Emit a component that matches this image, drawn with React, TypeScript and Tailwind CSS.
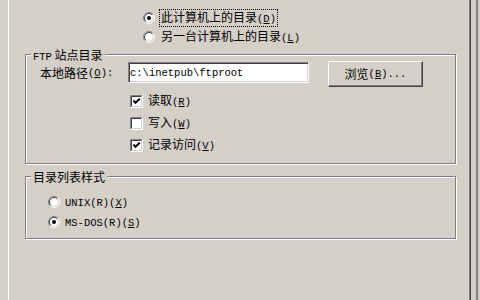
import React from 'react';

const L: React.FC<{ children: React.ReactNode }> = ({ children }) => (
  <span className="font-['Liberation_Mono',monospace] text-[10.5px]">{children}</span>
);

const Key: React.FC<{ k: string; tail?: string }> = ({ k, tail = '' }) => (
  <L>
    (<span className="underline underline-offset-1">{k}</span>){tail}
  </L>
);

const Radio: React.FC<{ checked?: boolean }> = ({ checked }) => (
  <svg width="12" height="12" viewBox="0 0 12 12" className="shrink-0">
    <circle cx="6" cy="6" r="5" fill="#fff" />
    <path d="M2.1 9.9 A5.5 5.5 0 0 1 9.9 2.1" fill="none" stroke="#808080" />
    <path d="M2.1 9.9 A5.5 5.5 0 0 0 9.9 2.1" fill="none" stroke="#fff" />
    <path d="M2.8 9.2 A4.5 4.5 0 0 1 9.2 2.8" fill="none" stroke="#404040" />
    <path d="M2.8 9.2 A4.5 4.5 0 0 0 9.2 2.8" fill="none" stroke="#d4d0c8" />
    {checked && <circle cx="6" cy="6" r="2" fill="#000" />}
  </svg>
);

const Check: React.FC<{ checked?: boolean }> = ({ checked }) => (
  <svg width="13" height="13" viewBox="0 0 13 13" className="shrink-0">
    <rect x="0" y="0" width="13" height="13" fill="#fff" />
    <path d="M0.5 12.5 V0.5 H12.5" fill="none" stroke="#808080" />
    <path d="M1.5 11.5 V1.5 H11.5" fill="none" stroke="#404040" />
    <path d="M0.5 12.5 H12.5 V0.5" fill="none" stroke="#fff" />
    <path d="M1.5 11.5 H11.5 V1.5" fill="none" stroke="#d4d0c8" />
    {checked && <path d="M3.5 5.5 L5.5 7.8 L9.8 3.6" fill="none" stroke="#000" strokeWidth="2" />}
  </svg>
);

const Group: React.FC<{ title: React.ReactNode; className: string; children: React.ReactNode }> = ({
  title,
  className,
  children,
}) => (
  <fieldset
    className={`w-[431px] border border-[#808080] shadow-[1px_1px_0_#fff,inset_1px_1px_0_#fff] ${className}`}
  >
    <legend className="ml-[5px] px-[2px] h-[13px] leading-[13px] bg-[#d4d0c8] whitespace-nowrap">{title}</legend>
    {children}
  </fieldset>
);

export default function App() {
  return (
    <div className="w-[480px] h-[300px] flex bg-[#d4d0c8] text-black text-[12px] leading-[14px] font-['Noto_Sans_CJK_SC',sans-serif] overflow-hidden">
      <div className="w-[8px] shrink-0" />
      <div className="w-[463px] shrink-0 border-l border-l-white border-r border-r-[#404040] shadow-[inset_-1px_0_0_#808080] pl-[16px]">
        <div className="pt-[8px]">
          <div className="h-[19px] flex items-center ml-[118px]">
            <Radio checked />
            <span className="ml-[4px] px-[1px] border border-dotted border-black whitespace-nowrap">
              此计算机上的目录<Key k="D" />
            </span>
          </div>
          <div className="h-[19px] flex items-center ml-[118px]">
            <Radio />
            <span className="ml-[6px] whitespace-nowrap">
              另一台计算机上的目录<Key k="L" />
            </span>
          </div>
        </div>

        <Group
          className="mt-[2px] h-[116px]"
          title={
            <>
              <L>FTP</L> 站点目录
            </>
          }
        >
          <div className="flex items-start mt-[1px]">
            <div className="ml-[14px] w-[88px] h-[21px] flex items-center whitespace-nowrap">
              本地路径<Key k="O" tail=":" />
            </div>
            <input
              readOnly
              value="c:\inetpub\ftproot"
              className="w-[181px] h-[21px] bg-white px-[1px] border border-t-[#808080] border-l-[#808080] border-b-white border-r-white shadow-[inset_1px_1px_0_#404040,inset_-1px_-1px_0_#d4d0c8] font-['Liberation_Mono',monospace] text-[10.5px] outline-none"
            />
            <button className="ml-[19px] -mt-[1px] w-[95px] h-[26px] flex items-center justify-center border border-t-white border-l-white border-b-[#404040] border-r-[#404040] shadow-[inset_-1px_-1px_0_#808080] bg-[#d4d0c8] whitespace-nowrap">
              浏览<Key k="B" tail="..." />
            </button>
          </div>
          <div className="mt-[3px] ml-[104px]">
            <div className="h-[22px] flex items-center">
              <Check checked />
              <span className="ml-[5px]">
                读取<Key k="R" />
              </span>
            </div>
            <div className="h-[22px] flex items-center">
              <Check />
              <span className="ml-[5px]">
                写入<Key k="W" />
              </span>
            </div>
            <div className="h-[22px] flex items-center">
              <Check checked />
              <span className="ml-[5px]">
                记录访问<Key k="V" />
              </span>
            </div>
          </div>
        </Group>

        <Group className="mt-[6px] h-[69px]" title="目录列表样式">
          <div className="mt-[9px] ml-[22px]">
            <div className="h-[20px] flex items-center">
              <Radio />
              <span className="ml-[5px]">
                <L>UNIX(R)</L>
                <Key k="X" />
              </span>
            </div>
            <div className="h-[20px] flex items-center">
              <Radio checked />
              <span className="ml-[5px]">
                <L>MS-DOS(R)</L>
                <Key k="S" />
              </span>
            </div>
          </div>
        </Group>
      </div>
      <div className="w-[5px] shrink-0" />
      <div className="w-[2px] shrink-0 bg-[#808080]" />
      <div className="flex-1" />
    </div>
  );
}
